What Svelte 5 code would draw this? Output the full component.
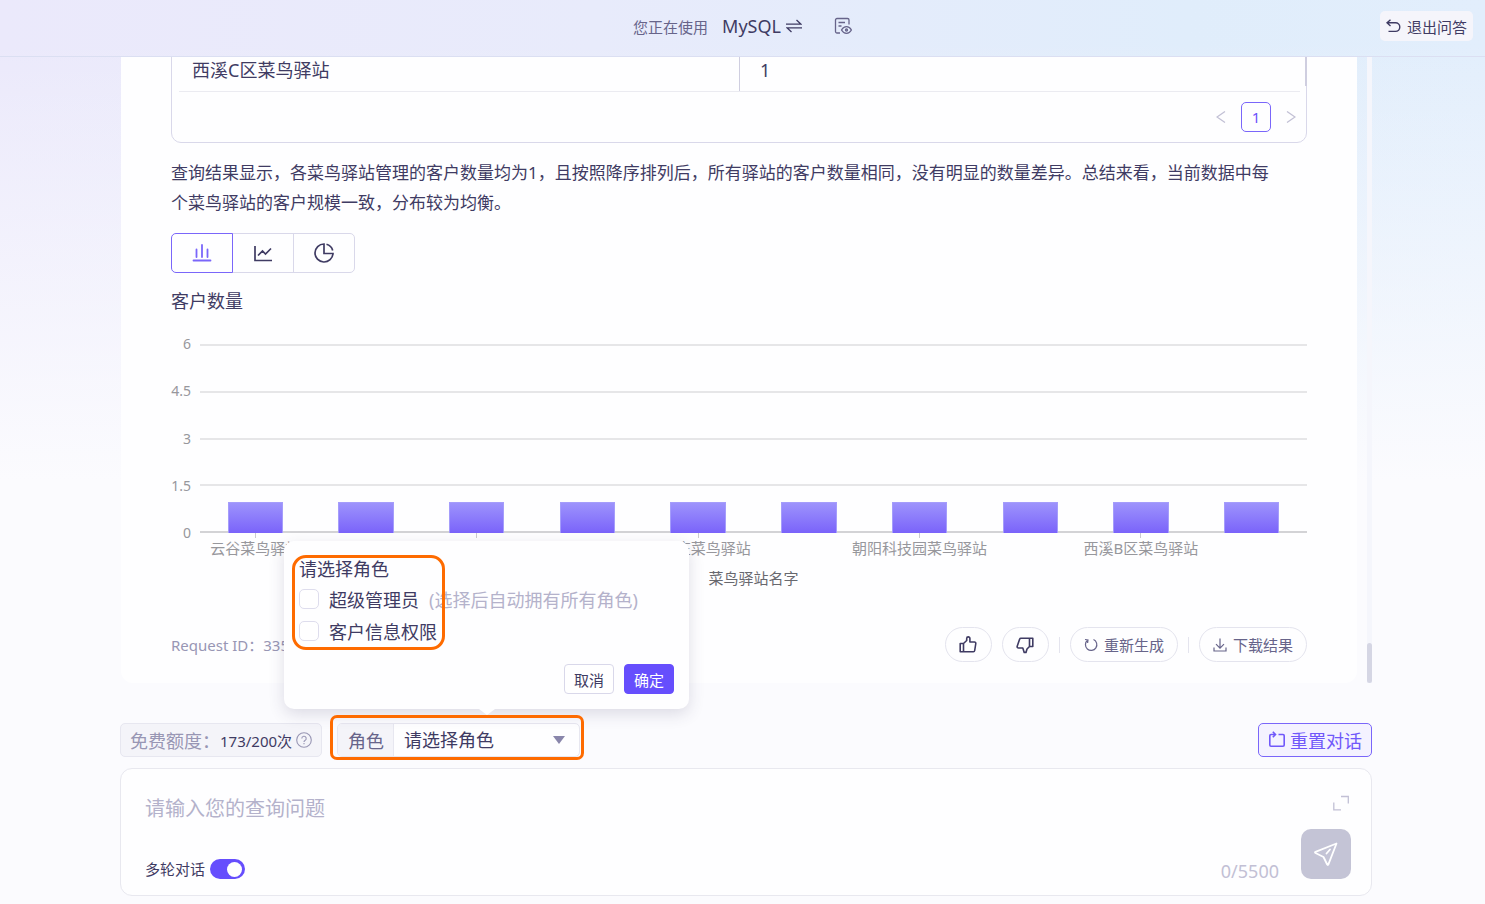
<script lang="ts">
  interface Bar {
    name: string;
    value: number;
  }

  const axisMax = 6;
  const yTicks = [6, 4.5, 3, 1.5, 0];

  // the axis only has room for every second name
  const bars: Bar[] = [
    { name: '云谷菜鸟驿站', value: 1 },
    { name: '', value: 1 },
    { name: '余杭菜鸟驿站', value: 1 },
    { name: '', value: 1 },
    { name: '李家庄菜鸟驿站', value: 1 },
    { name: '', value: 1 },
    { name: '朝阳科技园菜鸟驿站', value: 1 },
    { name: '', value: 1 },
    { name: '西溪B区菜鸟驿站', value: 1 },
    { name: '', value: 1 },
  ];

  let chartType = $state('bar');
  let multiTurn = $state(true);
  let popoverOpen = $state(true);
  let question = $state('');
  let isAdmin = $state(false);
  let isCustomer = $state(false);
</script>

<div class="app">
  <header class="topbar">
    <div class="source">
      <span class="using">您正在使用</span>
      <button class="plain db">
        MySQL
        <svg width="16" height="14" viewBox="0 0 16 14" fill="none" stroke="currentColor" stroke-width="1.3">
          <path d="M0 5.2h15L10.5 1M16 8.8H1L5.5 13" />
        </svg>
      </button>
      <button class="plain preview" aria-label="查看数据">
        <svg width="18" height="18" viewBox="0 0 18 18" fill="none" stroke="currentColor" stroke-width="1.3">
          <path d="M6 16H3a1.5 1.5 0 0 1-1.500-1.500V3A1.500 1.500 0 0 1 3 1.500h10.500A1.500 1.500 0 0 1 15 3v4.500M4.500 5.500H11M4.500 9H7.500" />
          <path d="M7.500 13c1.500-2.600 3-3.300 5-3.300s3.500.7 4.900 3.300c-1.400 2.600-2.900 3.300-4.900 3.300s-3.500-.7-5-3.300z" />
          <circle cx="12.500" cy="13" r="1" />
        </svg>
      </button>
    </div>
    <button class="exit">
      <svg width="15" height="14" viewBox="0 0 15 14" fill="none" stroke="currentColor" stroke-width="1.4">
        <path d="M4.500.7L1 3.800l3.500 3.100M1 3.800h8.500a4.300 4.300 0 0 1 0 8.600H2.500" />
      </svg>
      退出问答
    </button>
  </header>

  <main class="content">
    <section class="scroller">
      <article class="card">
        <div class="result">
          <table>
            <tbody>
              <tr>
                <td>西溪C区菜鸟驿站</td>
                <td>1</td>
              </tr>
            </tbody>
          </table>
          <div class="table-thumb"></div>
          <nav class="pager" aria-label="分页">
            <button class="plain arrow" aria-label="上一页">
              <svg width="10" height="12" viewBox="0 0 10 12" fill="none" stroke="currentColor" stroke-width="1.3"><path d="M9 .5L1 6l8 5.500" /></svg>
            </button>
            <button class="page">1</button>
            <button class="plain arrow" aria-label="下一页">
              <svg width="10" height="12" viewBox="0 0 10 12" fill="none" stroke="currentColor" stroke-width="1.3"><path d="M1 .5L9 6l-8 5.500" /></svg>
            </button>
          </nav>
        </div>

        <p class="summary">
          查询结果显示，各菜鸟驿站管理的客户数量均为1，且按照降序排列后，所有驿站的客户数量相同，没有明显的数量差异。总结来看，当前数据中每<br />个菜鸟驿站的客户规模一致，分布较为均衡。
        </p>

        <div class="types">
          <button class:active={chartType === 'bar'} aria-label="柱状图" onclick={() => (chartType = 'bar')}>
            <svg width="20" height="20" viewBox="0 0 20 20" fill="none" stroke="currentColor" stroke-width="1.8" stroke-linecap="round">
              <path d="M1.500 17.500h17M4.500 6.500v7.500M10 2v12M15.500 6.500v7.500" />
            </svg>
          </button>
          <button class:active={chartType === 'line'} aria-label="折线图" onclick={() => (chartType = 'line')}>
            <svg width="20" height="20" viewBox="0 0 20 20" fill="none" stroke="currentColor" stroke-width="1.7">
              <path d="M2 3v14.500h17M5 12.500l4.500-4.500 3 3L18 5.500" />
            </svg>
          </button>
          <button class:active={chartType === 'pie'} aria-label="饼图" onclick={() => (chartType = 'pie')}>
            <svg width="20" height="20" viewBox="0 0 20 20" fill="none" stroke="currentColor" stroke-width="1.7">
              <path d="M10 1a9 9 0 1 0 9 9.500H10z" />
              <path d="M12.500 1.300a8.800 8.800 0 0 1 6.200 6.200" />
            </svg>
          </button>
        </div>

        <h2>客户数量</h2>

        <div class="chart">
          <div class="y-axis">
            {#each yTicks as tick}
              <span>{tick}</span>
            {/each}
          </div>
          <div class="plot">
            <div class="lines">
              {#each yTicks as tick}
                <i class:base={tick === 0}></i>
              {/each}
            </div>
            <div class="bars">
              {#each bars as bar}
                <div class="slot">
                  <div class="bar" style="height: {(bar.value / axisMax) * 100}%"></div>
                </div>
              {/each}
            </div>
          </div>
          <div class="x-axis">
            {#each bars as bar}
              <div class="slot" class:tick={bar.name}><span>{bar.name}</span></div>
            {/each}
          </div>
          <div class="axis-name">菜鸟驿站名字</div>
        </div>

        <footer class="actions">
          <span class="request">Request ID：335A8C21</span>
          <button class="pill icon-only" aria-label="赞">
            <svg width="18" height="18" viewBox="0 0 18 18" fill="none" stroke="currentColor" stroke-width="1.6" stroke-linejoin="round">
              <path d="M4.500 7.500H1.200v8.200h3.300M4.500 15.700V7.500L7.700 4.500V2.500a1.600 1.600 0 0 1 3.200 0V6H15.500a1.300 1.300 0 0 1 1.300 1.500l-1.100 7a1.400 1.400 0 0 1-1.400 1.200z" />
            </svg>
          </button>
          <button class="pill icon-only" aria-label="踩">
            <svg width="18" height="18" viewBox="0 0 18 18" fill="none" stroke="currentColor" stroke-width="1.6" stroke-linejoin="round">
              <path d="M13.500 10.500h3.300V2.300h-3.300M13.500 2.300v8.200L11 13l-1 3.400H8.200L6.800 12H2.500a1.300 1.300 0 0 1-1.300-1.700L3.600 3.200a1.400 1.400 0 0 1 1.300-.9z" />
            </svg>
          </button>
          <i class="sep"></i>
          <button class="pill">
            <svg width="14" height="14" viewBox="0 0 14 14" fill="none" stroke="currentColor" stroke-width="1.2">
              <path d="M3.500 2.300A5.700 5.700 0 1 0 9.500 1.500M1 1.500l3 .5-.4 3" />
            </svg>
            重新生成
          </button>
          <i class="sep"></i>
          <button class="pill">
            <svg width="14" height="14" viewBox="0 0 14 14" fill="none" stroke="currentColor" stroke-width="1.2">
              <path d="M7 .5V10M3 6.200l4 4 4-4M1 9.500V13h12V9.500" />
            </svg>
            下载结果
          </button>
        </footer>
      </article>
      <div class="track"><div class="thumb"></div></div>
    </section>

    <div class="toolbar">
      <div class="quota">
        <span>免费额度：</span>
        <b>173/200次</b>
        <svg width="16" height="16" viewBox="0 0 16 16" fill="none" stroke="currentColor" stroke-width="1.1">
          <circle cx="8" cy="8" r="7.300" />
          <path d="M5.800 6.500a2.200 2.200 0 1 1 3.200 1.900c-.7.400-1 .7-1 1.500M8 11v1.200" />
        </svg>
      </div>

      <div class="role">
        <label for="role">角色</label>
        <div class="select">
          <select id="role">
            <option>请选择角色</option>
          </select>
          <svg width="12" height="8" viewBox="0 0 12 8" fill="currentColor"><path d="M0 0h12L6 8z" /></svg>
        </div>

        {#if popoverOpen}
          <div class="popover">
            <div class="options">
              <div class="popover-title">请选择角色</div>
              <label class="option">
                <input type="checkbox" bind:checked={isAdmin} />
                超级管理员
                <span class="hint">(选择后自动拥有所有角色)</span>
              </label>
              <label class="option">
                <input type="checkbox" bind:checked={isCustomer} />
                客户信息权限
              </label>
            </div>
            <div class="popover-foot">
              <button onclick={() => (popoverOpen = false)}>取消</button>
              <button class="primary" onclick={() => (popoverOpen = false)}>确定</button>
            </div>
          </div>
        {/if}
      </div>

      <button class="reset">
        <svg width="18" height="18" viewBox="0 0 18 18" fill="none" stroke="currentColor" stroke-width="1.6">
          <path d="M10.500 3.500H15A1.200 1.200 0 0 1 16.200 4.700V14A1.200 1.200 0 0 1 15 15.200H3A1.200 1.200 0 0 1 1.800 14V4.700A1.200 1.200 0 0 1 3 3.500H6.500M4.800.8l2.700 2.700-2.700 2.700" />
        </svg>
        重置对话
      </button>
    </div>

    <div class="composer">
      <div class="composer-top">
        <textarea rows="1" aria-label="查询问题" placeholder="请输入您的查询问题" bind:value={question}></textarea>
        <button class="plain expand" aria-label="展开">
          <svg width="16" height="16" viewBox="0 0 16 16" fill="none" stroke="currentColor" stroke-width="1.3">
            <path d="M8 1.500h7.300V8.500M.8 7.500v7.300H8" />
          </svg>
        </button>
      </div>
      <div class="composer-bottom">
        <label class="multi">
          多轮对话
          <input type="checkbox" role="switch" bind:checked={multiTurn} />
        </label>
        <span class="count">{question.length}/5500</span>
        <button class="send" aria-label="发送">
          <svg width="26" height="26" viewBox="0 0 26 26" fill="none" stroke="currentColor" stroke-width="1.8" stroke-linejoin="round" stroke-linecap="round">
            <path d="M23.500 2.500L2.500 10.800c-.7.300-.7.900 0 1.200l8 4 3.700 7.500c.3.700 1 .6 1.200-.1zM17 8.500l-3.500 4" />
          </svg>
        </button>
      </div>
    </div>
  </main>
</div>

<style>
  :global(body) {
    margin: 0;
  }

  .app {
    height: 100vh;
    display: flex;
    flex-direction: column;
    overflow: hidden;
    box-sizing: border-box;
    color: #3f3b63;
    font-family: 'Noto Sans', 'Noto Sans CJK SC', sans-serif;
    font-size: 18px;
    background:
      linear-gradient(to bottom, rgba(251, 251, 254, 0) 40px, #fbfbfe 480px),
      linear-gradient(to right, #ebe9fb 0%, #e8ebfb 40%, #e0edfb 80%, #e2eefc 100%);
  }

  .app *,
  .app *::after {
    box-sizing: border-box;
  }

  button,
  select,
  textarea {
    font: inherit;
    color: inherit;
    margin: 0;
  }

  button {
    display: flex;
    align-items: center;
    justify-content: center;
    cursor: pointer;
    padding: 0;
    white-space: nowrap;
  }

  svg {
    flex: none;
    display: block;
  }

  .plain {
    background: none;
    border: none;
  }

  /* top bar */
  .topbar {
    flex: none;
    height: 57px;
    display: grid;
    grid-template-columns: 1fr auto 1fr;
    align-items: center;
    padding: 0 12px 4px;
    border-bottom: 1px solid #dbdff2;
    font-size: 15px;
  }

  .source {
    grid-column: 2;
    display: flex;
    align-items: center;
  }

  .using {
    color: #67648a;
    margin-right: 14px;
  }

  .db {
    font-size: 18px;
    gap: 5px;
    margin-right: 32px;
  }

  .preview {
    color: #67648a;
  }

  .exit {
    justify-self: end;
    height: 30px;
    padding: 0 6px;
    gap: 6px;
    border: none;
    border-radius: 5px;
    background: #f5f5fb;
  }

  /* conversation */
  .content {
    flex: 1;
    min-height: 0;
    display: flex;
    flex-direction: column;
    padding: 0 113px 8px 120px;
  }

  .scroller {
    flex: 1;
    min-height: 0;
    display: flex;
    align-items: flex-end;
    justify-content: space-between;
    gap: 10px;
    overflow: hidden;
  }

  .card {
    flex: 1;
    min-width: 0;
    margin-left: 1px;
    padding: 0 50px 21px;
    background: #fefeff;
    border-radius: 12px;
  }

  .track {
    width: 5px;
    height: 100%;
    display: flex;
    align-items: flex-end;
    background: #f5f6fc;
  }

  .thumb {
    width: 5px;
    height: 40px;
    border-radius: 3px;
    background: #d5d6e4;
  }

  .result {
    position: relative;
    padding: 0 6px 10px 7px;
    border: 1px solid #d9d8ea;
    border-radius: 10px;
  }

  .table-thumb {
    position: absolute;
    top: 0;
    right: -1px;
    width: 2px;
    height: 44px;
    background: #cfcee0;
  }

  table {
    width: 100%;
    border-collapse: collapse;
    table-layout: fixed;
  }

  td {
    height: 50px;
    padding: 8px 20px 0 13px;
    border-bottom: 1px solid #ebebf1;
    line-height: 24px;
  }

  td + td {
    padding-left: 20px;
    border-left: 1px solid #cfcee0;
  }

  .pager {
    display: flex;
    justify-content: flex-end;
    padding-top: 10px;
    gap: 15px;
    margin-right: 4px;
  }

  .arrow {
    color: #c2c0d5;
  }

  .page {
    width: 30px;
    height: 30px;
    font-size: 15px;
    color: #6b52fb;
    background: none;
    border: 1px solid #7a66fa;
    border-radius: 5px;
  }

  .summary {
    margin: 15px 0;
    font-size: 17px;
    line-height: 30px;
    white-space: nowrap;
  }

  .types {
    display: flex;
  }

  .types button {
    width: 62px;
    height: 40px;
    background: none;
    border: 1px solid #d9d8ea;
  }

  .types button + button {
    margin-left: -1px;
  }

  .types button:first-child {
    border-radius: 5px 0 0 5px;
  }

  .types button:last-child {
    border-radius: 0 5px 5px 0;
  }

  .types .active {
    z-index: 1;
    color: #7a66fa;
    border-color: #7a66fa;
  }

  h2 {
    margin: 13px 0 28px;
    font-size: 18px;
    font-weight: 400;
    line-height: 30px;
  }

  /* chart */
  .chart {
    display: grid;
    grid-template-columns: 20px 1fr;
    column-gap: 9px;
    color: #97979c;
  }

  .y-axis {
    height: 189px;
    display: flex;
    flex-direction: column;
    justify-content: space-between;
    align-items: flex-end;
    font-size: 14px;
    line-height: 16px;
  }

  .y-axis span {
    margin: -8px 0;
  }

  .plot {
    display: grid;
  }

  .lines,
  .bars {
    grid-area: 1 / 1;
    display: flex;
  }

  .lines {
    flex-direction: column;
    justify-content: space-between;
  }

  .lines i {
    height: 2px;
    background: #e6e6e8;
  }

  .lines .base {
    background: #d3d3d6;
  }

  .slot {
    flex: 1 1 0;
    min-width: 0;
    display: flex;
    justify-content: center;
    align-items: flex-end;
  }

  .bar {
    width: 50%;
    background: linear-gradient(to bottom, #9d93fc, #7a63fa);
    border: 1px solid #a59dfb;
    border-bottom: none;
  }

  .x-axis {
    grid-column: 2;
    display: flex;
    font-size: 15px;
    line-height: 20px;
  }

  .x-axis .slot {
    flex-direction: column;
    align-items: center;
    justify-content: flex-start;
    white-space: nowrap;
  }

  .x-axis .slot::before {
    content: '';
    width: 1px;
    height: 5px;
  }

  .x-axis .tick::before {
    background: #cbcbcf;
  }

  .axis-name {
    grid-column: 2;
    margin: 10px 0 39px;
    text-align: center;
    font-size: 15px;
    line-height: 20px;
    color: #68686e;
  }

  .actions {
    display: flex;
    align-items: center;
    gap: 10px;
    font-size: 15px;
  }

  .request {
    flex: 1;
    color: #9896b4;
  }

  .pill {
    height: 35px;
    padding: 0 13px;
    gap: 6px;
    color: #67648a;
    background: none;
    border: 1px solid #e4e4ee;
    border-radius: 18px;
  }

  .icon-only {
    width: 47px;
    padding: 0;
    color: #3f3b63;
  }

  .sep {
    width: 1px;
    height: 16px;
    background: #e4e4ee;
  }

  /* toolbar */
  .toolbar {
    flex: none;
    display: flex;
    align-items: center;
    height: 34px;
    margin: 40px 0 11px;
  }

  .quota {
    height: 34px;
    display: flex;
    align-items: center;
    padding: 0 9px;
    margin-right: 15px;
    color: #9896b4;
    background: #f4f4f9;
    border: 1px solid #e7e7f0;
    border-radius: 5px;
    white-space: nowrap;
  }

  .quota b {
    font-size: 15px;
    font-weight: 400;
    color: #3f3b63;
    margin-right: 4px;
  }

  .role {
    position: relative;
    width: 243px;
    height: 34px;
    display: flex;
    border: 1px solid #e7e7f0;
    border-radius: 5px;
    background: #fefeff;
  }

  .role > label {
    display: flex;
    align-items: center;
    padding: 0 9px 0 10px;
    color: #67648a;
    background: #f4f4f9;
    border-right: 1px solid #e7e7f0;
    border-radius: 4px 0 0 4px;
  }

  .select {
    flex: 1;
    display: grid;
    align-items: center;
    color: #8986ab;
  }

  .select select,
  .select svg {
    grid-area: 1 / 1;
  }

  .select svg {
    justify-self: end;
    margin-right: 14px;
    pointer-events: none;
  }

  select {
    appearance: none;
    width: 100%;
    height: 32px;
    padding: 0 30px 0 10px;
    color: #3f3b63;
    background: none;
    border: none;
    outline: none;
  }

  .role::after,
  .options::after {
    content: '';
    position: absolute;
    border: 3px solid #fe6b00;
    pointer-events: none;
  }

  .role::after {
    inset: -9px -5px -4px -8px;
    border-radius: 7px;
  }

  .popover {
    position: absolute;
    left: -54px;
    bottom: 47px;
    width: 405px;
    padding: 14px 15px 15px;
    background: #fefeff;
    border-radius: 10px;
    box-shadow: 0 5px 16px rgba(55, 51, 92, 0.16);
  }

  .popover::after {
    content: '';
    position: absolute;
    left: 50%;
    bottom: -6px;
    margin-left: -8px;
    border: 8px solid transparent;
    border-top: 6px solid #fefeff;
    border-bottom: none;
  }

  .options {
    position: relative;
  }

  .options::after {
    top: 0;
    left: -7px;
    width: 153px;
    height: 95px;
    border-radius: 14px;
  }

  .popover-title {
    line-height: 28px;
  }

  .option {
    display: flex;
    align-items: center;
    height: 32px;
    white-space: nowrap;
  }

  .option input {
    appearance: none;
    width: 20px;
    height: 20px;
    margin: 0 10px 0 0;
    border: 1px solid #dedded;
    border-radius: 5px;
    background: #fff;
  }

  .option input:checked {
    background: #664efd;
  }

  .hint {
    margin-left: 10px;
    color: #b4b2cb;
  }

  .popover-foot {
    display: flex;
    justify-content: flex-end;
    gap: 10px;
    margin-top: 17px;
  }

  .popover-foot button {
    height: 30px;
    padding: 0 9px;
    font-size: 15px;
    background: #fff;
    border: 1px solid #d9d8ea;
    border-radius: 4px;
  }

  .popover-foot .primary {
    color: #fff;
    background: #664efd;
    border-color: #664efd;
  }

  .reset {
    height: 34px;
    margin-left: auto;
    padding: 0 9px;
    gap: 4px;
    color: #7058fa;
    background: #f4f2ff;
    border: 1px solid #7a66fa;
    border-radius: 5px;
  }

  /* composer */
  .composer {
    flex: none;
    padding: 26px 20px 16px 24px;
    background: #fefeff;
    border: 1px solid #e8e8ef;
    border-radius: 12px;
  }

  .composer-top {
    display: flex;
    align-items: flex-start;
    height: 34px;
  }

  textarea {
    flex: 1;
    height: 28px;
    padding: 0;
    font-size: 20px;
    line-height: 28px;
    background: none;
    border: none;
    outline: none;
    resize: none;
    overflow: hidden;
  }

  textarea::placeholder {
    color: #b4b2cb;
    opacity: 1;
  }

  .expand {
    color: #c2c0d5;
    margin-right: 2px;
  }

  .composer-bottom {
    display: flex;
    align-items: flex-end;
  }

  .multi {
    display: flex;
    align-items: center;
    gap: 5px;
    font-size: 15px;
    line-height: 20px;
  }

  .multi input {
    appearance: none;
    display: flex;
    align-items: center;
    width: 35px;
    height: 20px;
    margin: 0;
    padding: 0 3px;
    border-radius: 10px;
    background: #c4c3d6;
  }

  .multi input::before {
    content: '';
    width: 15px;
    height: 15px;
    border-radius: 50%;
    background: #fff;
  }

  .multi input:checked {
    justify-content: flex-end;
    background: #664efd;
  }

  .count {
    margin-left: auto;
    margin-right: 22px;
    line-height: 16px;
    color: #c2c0d5;
  }

  .send {
    width: 50px;
    height: 50px;
    color: #fff;
    background: #c4c4d6;
    border: none;
    border-radius: 10px;
  }
</style>
